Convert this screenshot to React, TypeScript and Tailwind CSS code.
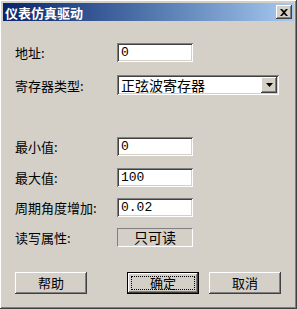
import React from "react";

const raised =
  "shadow-[inset_-1px_-1px_#404040,inset_1px_1px_#ffffff,inset_-2px_-2px_#808080,inset_2px_2px_#d4d0c8]";
const sunken =
  "shadow-[inset_1px_1px_#808080,inset_-1px_-1px_#ffffff,inset_2px_2px_#404040,inset_-2px_-2px_#d4d0c8]";

const font = { fontFamily: '"Noto Sans CJK SC", "Noto Sans", sans-serif' };
const mono = { fontFamily: '"Liberation Mono", "DejaVu Sans Mono", monospace' };

function Field({ label, value, top }: { label: string; value: string; top: string }) {
  return (
    <div className={`flex items-center ${top}`}>
      <div className="w-[102px] text-[13px] leading-none text-black">{label}</div>
      <div className={`flex h-[19px] w-[76px] items-center bg-white pl-[4px] text-[13px] text-black ${sunken}`} style={mono}>
        {value}
      </div>
    </div>
  );
}

function Button({ text, primary }: { text: string; primary?: boolean }) {
  if (primary) {
    return (
      <div className="h-[22px] w-[72px] border border-black bg-[#d4d0c8]">
        <div className={`flex h-full w-full items-center justify-center p-[3px] ${raised}`}>
          <div className="flex h-full w-full items-center justify-center border border-dotted border-black text-[13px] text-black">
            {text}
          </div>
        </div>
      </div>
    );
  }
  return (
    <div className={`flex h-[22px] w-[72px] items-center justify-center bg-[#d4d0c8] text-[13px] text-black ${raised}`}>
      {text}
    </div>
  );
}

export default function App() {
  return (
    <div
      className={`h-[309px] w-[297px] bg-[#d4d0c8] p-[3px] ${raised}`}
      style={font}
    >
      <div className="flex h-[18px] items-center justify-between bg-gradient-to-r from-[#0a246a] to-[#a6caf0] pl-[2px] pr-[2px]">
        <span className="text-[13px] font-bold leading-none text-white">仪表仿真驱动</span>
        <div className={`flex h-[14px] w-[16px] items-center justify-center bg-[#d4d0c8] ${raised}`}>
          <svg width="8" height="7" viewBox="0 0 8 7">
            <path d="M0 0h2l2 2 2-2h2L5 3.5 8 7H6L4 5 2 7H0l3-3.5z" fill="#000" />
          </svg>
        </div>
      </div>

      <div className="flex flex-col pl-[12px]">
        <Field label="地址:" value="0" top="mt-[22px]" />

        <div className="mt-[13px] flex items-center">
          <div className="w-[102px] text-[13px] leading-none text-black">寄存器类型:</div>
          <div className={`flex h-[20px] w-[162px] items-center justify-between bg-white pl-[4px] pr-[2px] ${sunken}`}>
            <span className="text-[14px] leading-none text-black">正弦波寄存器</span>
            <div className={`flex h-[16px] w-[16px] items-center justify-center bg-[#d4d0c8] ${raised}`}>
              <svg width="7" height="4" viewBox="0 0 7 4">
                <path d="M0 0h7L3.5 4z" fill="#000" />
              </svg>
            </div>
          </div>
        </div>

        <Field label="最小值:" value="0" top="mt-[42px]" />
        <Field label="最大值:" value="100" top="mt-[12px]" />
        <Field label="周期角度增加:" value="0.02" top="mt-[11px]" />

        <div className="mt-[11px] flex items-center">
          <div className="w-[102px] text-[13px] leading-none text-black">读写属性:</div>
          <div className="flex h-[19px] w-[76px] items-center justify-center border border-t-[#808080] border-l-[#808080] border-b-white border-r-white text-[14px] text-black">
            只可读
          </div>
        </div>

        <div className="mt-[25px] flex">
          <Button text="帮助" />
          <div className="ml-[40px]">
            <Button text="确定" primary />
          </div>
          <div className="ml-[10px]">
            <Button text="取消" />
          </div>
        </div>
      </div>
    </div>
  );
}
